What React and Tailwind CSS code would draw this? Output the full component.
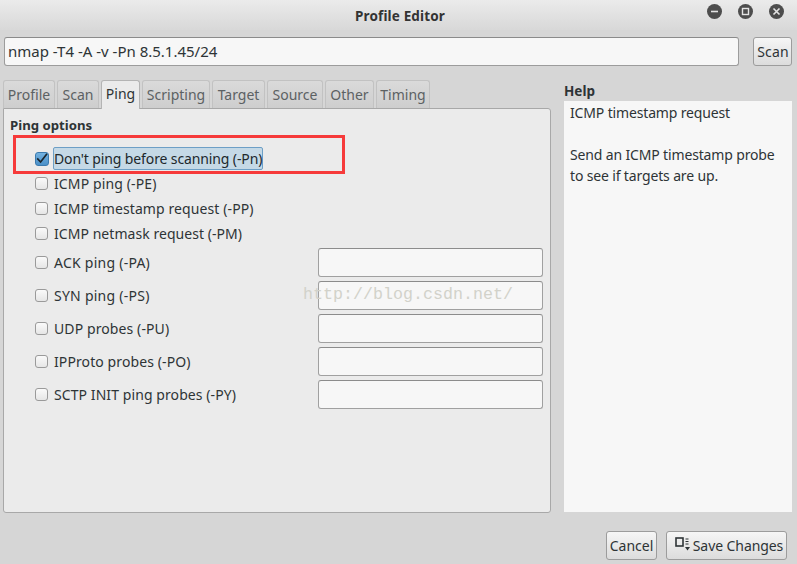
const tabs = [
  { label: "Profile", width: "w-[52px]" },
  { label: "Scan", width: "w-[42px]" },
  { label: "Ping", width: "w-[39px]", active: true },
  { label: "Scripting", width: "w-[68px]" },
  { label: "Target", width: "w-[53px]" },
  { label: "Source", width: "w-[56px]" },
  { label: "Other", width: "w-[49px]" },
  { label: "Timing", width: "w-[54px]" },
]

const plainOptions = [
  { label: "ICMP ping (-PE)", spacing: "tracking-[0.12px]" },
  { label: "ICMP timestamp request (-PP)", spacing: "tracking-[0.1px]" },
  { label: "ICMP netmask request (-PM)", spacing: "tracking-[0.05px]" },
]

const inputOptions = [
  { label: "ACK ping (-PA)", spacing: "tracking-[0.25px]" },
  { label: "SYN ping (-PS)", spacing: "tracking-[0.25px]" },
  { label: "UDP probes (-PU)", spacing: "tracking-[0.1px]" },
  { label: "IPProto probes (-PO)", spacing: "tracking-[0.1px]" },
  { label: "SCTP INIT ping probes (-PY)", spacing: "tracking-[0.08px]" },
]

function Box() {
  return (
    <span className="block w-[13px] h-[13px] rounded-[3px] border border-[#9a9a9a] bg-gradient-to-b from-[#fafafa] to-[#e6e6e6] shrink-0" />
  )
}

function CheckedBox() {
  return (
    <span className="flex items-center justify-center w-[14px] h-[14px] rounded-[3px] border border-[#3a7aae] bg-gradient-to-b from-[#74b2e0] to-[#4a90c8] shrink-0">
      <svg width="12" height="12" viewBox="0 0 12 12" fill="none" className="overflow-visible">
        <path d="M1.2 5.4 L4.6 9 L11 0.8" stroke="#1b252c" strokeWidth="1.7" />
      </svg>
    </span>
  )
}

function WindowButton({ children }) {
  return (
    <span className="flex items-center justify-center w-[15px] h-[15px] rounded-full bg-[#4d4d4d]">
      <svg width="9" height="9" viewBox="0 0 9 9" fill="none" stroke="#e4e4e4">
        {children}
      </svg>
    </span>
  )
}

function Button({ children, className = "" }) {
  return (
    <button
      type="button"
      className={`flex items-center justify-center h-[29px] rounded-[3px] border border-[#9c9c9c] bg-gradient-to-b from-[#f6f6f6] to-[#dcdcdc] text-[#2e3436] ${className}`}
    >
      {children}
    </button>
  )
}

export default function App() {
  return (
    <div className="relative w-[797px] h-[564px] overflow-hidden flex flex-col bg-[#d6d6d6] text-[#2e3436] font-['Noto_Sans',sans-serif] text-[14px]">
      <div className="flex items-center h-[30px] pt-[2px] bg-gradient-to-b from-[#ebebeb] to-[#d8d8d8]">
        <div className="flex-1 pl-[3px] text-center font-bold text-[#333] text-[13.5px] tracking-[0.15px]">Profile Editor</div>
        <div className="absolute right-[13px] top-[4px] flex gap-[16px]">
          <WindowButton>
            <path d="M1 4.5 H8" strokeWidth="1.6" />
          </WindowButton>
          <WindowButton>
            <rect x="1.5" y="1.5" width="6" height="6" strokeWidth="1.4" />
          </WindowButton>
          <WindowButton>
            <path d="M1.5 1.5 L7.5 7.5 M7.5 1.5 L1.5 7.5" strokeWidth="1.6" />
          </WindowButton>
        </div>
      </div>

      <div className="flex mt-[7px] pl-[4px] pr-[5px] gap-[14px]">
        <div className="w-[735px] h-[29px] flex items-center pl-[3px] rounded-[3px] border border-[#9c9c9c] border-t-[#8a8a8a] bg-[#f7f7f7] text-[15px]">
          nmap -T4 -A -v -Pn 8.5.1.45/24
        </div>
        <Button className="w-[39px] pl-px tracking-[0.2px]">Scan</Button>
      </div>

      <div className="flex mt-[14px] pl-[3px] pr-[5px] gap-[13px]">
        <div className="w-[548px] flex flex-col">
          <div className="flex gap-[2px] h-[28px] items-end">
            {tabs.map((tab) =>
              tab.active ? (
                <div
                  key={tab.label}
                  className={`${tab.width} relative z-10 h-[29px] -mb-px pb-[3px] flex items-center justify-center rounded-t-[3px] border border-b-0 border-[#b4b4b4] bg-[#ebebeb] text-[#2e3436]`}
                >
                  {tab.label}
                </div>
              ) : (
                <div
                  key={tab.label}
                  className={`${tab.width} h-[28px] flex items-center justify-center rounded-t-[3px] border border-b-0 border-[#c2c2c2] bg-gradient-to-b from-[#dadada] to-[#cecece] text-[#5c6163]`}
                >
                  {tab.label}
                </div>
              ),
            )}
          </div>
          <div className="h-[405px] rounded-b-[3px] rounded-tr-[3px] border border-[#a8a8a8] bg-[#ebebeb] pl-[6px] pt-[7px]">
            <div className="h-[19px] flex items-center font-bold text-[13.2px]">Ping options</div>
            <div className="flex items-center h-[25px] mt-[11px] pl-[25px] gap-[4px]">
              <CheckedBox />
              <span className="h-[23px] flex items-center rounded-[2px] border border-[#6d9fc6] bg-[#c5d9e6] text-[#20282c] tracking-[-0.12px]">
                Don't ping before scanning (-Pn)
              </span>
            </div>
            {plainOptions.map((option) => (
              <div key={option.label} className="flex items-center h-[25px] pl-[25px] gap-[6px]">
                <Box />
                <span className={option.spacing}>{option.label}</span>
              </div>
            ))}
            <div className="flex flex-col">
              {inputOptions.map((option) => (
                <div key={option.label} className="flex items-center h-[33px] pl-[25px]">
                  <Box />
                  <span className={`ml-[6px] flex-1 ${option.spacing}`}>{option.label}</span>
                  <div className="w-[225px] h-[29px] mr-[7px] rounded-[3px] border border-[#a0a0a0] border-t-[#8c8c8c] bg-[#f7f7f7]" />
                </div>
              ))}
            </div>
          </div>
        </div>

        <div className="w-[228px] flex flex-col -mt-[1px]">
          <div className="h-[22px] pt-[2px] flex items-center font-bold text-[13.5px]">Help</div>
          <div className="h-[411px] bg-[#f7f7f7] px-[6px] pt-px leading-[21px] tracking-[-0.15px]">
            <p>ICMP timestamp request</p>
            <p className="mt-[21px]">Send an ICMP timestamp probe</p>
            <p>to see if targets are up.</p>
          </div>
        </div>
      </div>

      <div className="flex justify-end gap-[9px] mt-[18px] pr-[10px]">
        <Button className="w-[51px]">Cancel</Button>
        <Button className="w-[121px] gap-[3px] pl-[5px] tracking-[-0.08px]">
          <svg width="15" height="15" viewBox="0 0 15 15" fill="none" className="-mt-[3px]">
            <rect x="1" y="1" width="7" height="8" stroke="#2e3436" strokeWidth="1.6" />
            <path d="M10.5 2 H13.5 M10.5 4.5 H13.5 M10.5 7 H13.5" stroke="#2e3436" strokeWidth="1" />
            <path d="M10 10 H15 L12.5 13.5 Z" fill="#2e3436" />
          </svg>
          Save Changes
        </Button>
      </div>

      <div className="absolute left-[13px] top-[135px] w-[332px] h-[39px] border-[3px] border-[#f63a3a]" />
      <div className="absolute left-[303px] top-[282px] font-['Liberation_Mono',monospace] text-[16.67px] text-[#d2d2ca]">
        http://blog.csdn.net/
      </div>
    </div>
  )
}
